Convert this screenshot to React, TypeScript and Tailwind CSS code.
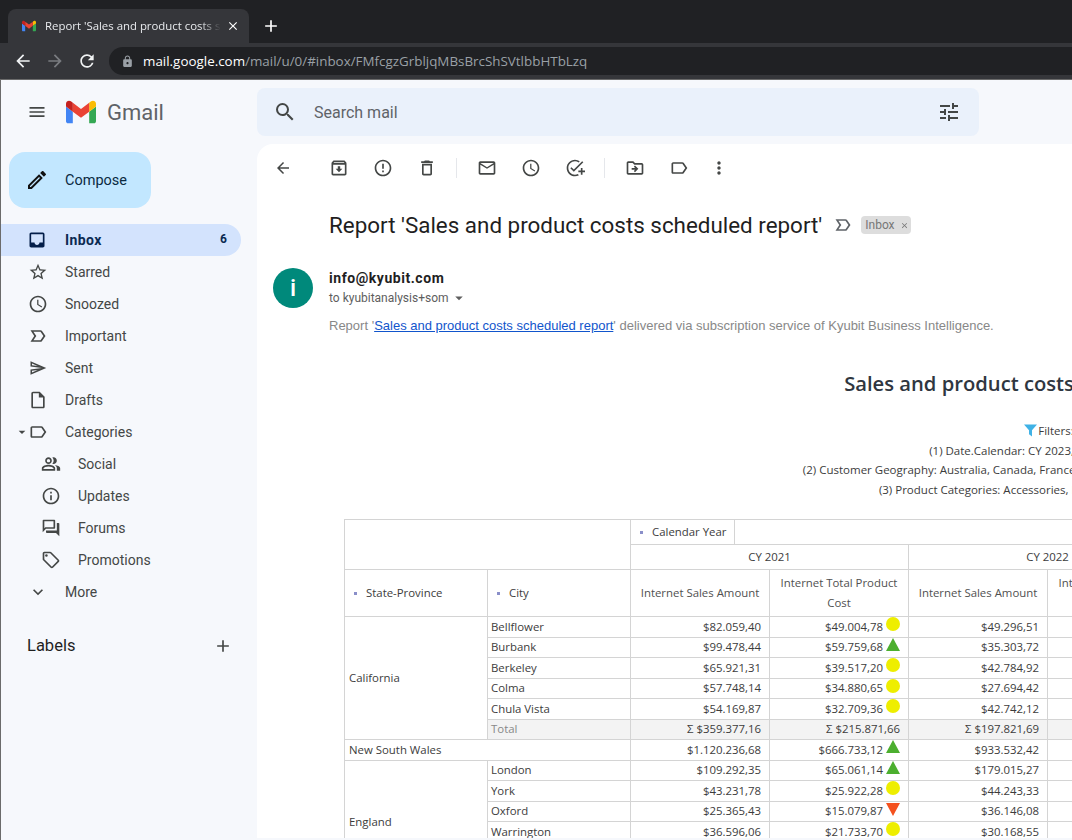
import React from "react";
import {
  MdMenu, MdSearch, MdTune, MdArrowBack, MdArrowForward, MdRefresh, MdLock, MdClose, MdAdd,
  MdInbox, MdStarBorder, MdAccessTime, MdLabelImportantOutline, MdOutlineSend, MdOutlineInsertDriveFile,
  MdLabelOutline, MdOutlinePeopleAlt, MdInfoOutline, MdOutlineForum, MdOutlineLocalOffer, MdExpandMore,
  MdOutlineArchive, MdErrorOutline, MdOutlineDelete, MdMailOutline, MdOutlineAddTask, MdOutlineDriveFileMove,
  MdMoreVert, MdOutlineEdit, MdArrowDropDown,
} from "react-icons/md";

function GmailLogo({ className }: { className: string }) {
  return (
    <svg viewBox="0 0 24 24" className={className}>
      <path fill="#4285F4" d="M1.636 21.002h3.819v-9.273L0 7.637v11.729c0 .904.732 1.636 1.636 1.636" />
      <path fill="#34A853" d="M18.545 21.002h3.819c.904 0 1.636-.732 1.636-1.636V7.637l-5.455 4.092" />
      <path fill="#FBBC04" d="M18.545 4.638v7.091L24 7.637V5.457c0-2.023-2.309-3.178-3.927-1.964" />
      <path fill="#EA4335" d="M5.455 11.729V4.638L12 9.548l6.545-4.91v7.091L12 16.639" />
      <path fill="#C5221F" d="M0 5.457v2.18l5.455 4.092V4.638L3.927 3.493C2.309 2.28 0 3.434 0 5.457" />
    </svg>
  );
}

type Nav = { icon: React.ReactNode; label: string };

const navTop: Nav[] = [
  { icon: <MdStarBorder size={20} />, label: "Starred" },
  { icon: <MdAccessTime size={20} />, label: "Snoozed" },
  { icon: <MdLabelImportantOutline size={20} />, label: "Important" },
  { icon: <MdOutlineSend size={18} />, label: "Sent" },
  { icon: <MdOutlineInsertDriveFile size={20} />, label: "Drafts" },
];
const navSub: Nav[] = [
  { icon: <MdOutlinePeopleAlt size={20} />, label: "Social" },
  { icon: <MdInfoOutline size={20} />, label: "Updates" },
  { icon: <MdOutlineForum size={20} />, label: "Forums" },
  { icon: <MdOutlineLocalOffer size={20} />, label: "Promotions" },
];

function Row({ icon, label, sub }: Nav & { sub?: boolean }) {
  return (
    <div className={`flex h-8 items-center text-sm text-[#444746] ${sub ? "pl-10" : "pl-[27px]"}`}>
      <span className="flex w-5 justify-center text-[#444746]">{icon}</span>
      <span className="ml-[17px]">{label}</span>
    </div>
  );
}

function Tool({ icon, className = "" }: { icon: React.ReactNode; className?: string }) {
  return <span className={`flex w-11 justify-center text-[#444746] ${className}`}>{icon}</span>;
}

type Mark = "y" | "u" | "d" | undefined;

function Indicator({ mark }: { mark: Mark }) {
  if (!mark) return null;
  return (
    <svg viewBox="0 0 14 14" className="-mt-[5px] ml-[3px] h-[14px] w-[14px] shrink-0">
      {mark === "y" && <circle cx="7" cy="7" r="7" fill="#eeee00" />}
      {mark === "u" && <polygon points="7,0 14,13 0,13" fill="#4caf2f" />}
      {mark === "d" && <polygon points="0,1 14,1 7,14" fill="#f4511e" />}
    </svg>
  );
}

const border = "border border-[#d4d4d4]";

function Money({ value, mark, total }: { value: string; mark?: Mark; total?: boolean }) {
  return (
    <td className={`${border} pr-2 ${total ? "bg-[#f3f3f3]" : ""}`}>
      <div className="flex items-center justify-end">
        <span>{value}</span>
        <Indicator mark={mark} />
      </div>
    </td>
  );
}

type R = { city: string; a: string; b: string; m?: Mark; c: string };

const california: R[] = [
  { city: "Bellflower", a: "$82.059,40", b: "$49.004,78", m: "y", c: "$49.296,51" },
  { city: "Burbank", a: "$99.478,44", b: "$59.759,68", m: "u", c: "$35.303,72" },
  { city: "Berkeley", a: "$65.921,31", b: "$39.517,20", m: "y", c: "$42.784,92" },
  { city: "Colma", a: "$57.748,14", b: "$34.880,65", m: "y", c: "$27.694,42" },
  { city: "Chula Vista", a: "$54.169,87", b: "$32.709,36", m: "y", c: "$42.742,12" },
];
const england: R[] = [
  { city: "London", a: "$109.292,35", b: "$65.061,14", m: "u", c: "$179.015,27" },
  { city: "York", a: "$43.231,78", b: "$25.922,28", m: "y", c: "$44.243,33" },
  { city: "Oxford", a: "$25.365,43", b: "$15.079,87", m: "d", c: "$36.146,08" },
  { city: "Warrington", a: "$36.596,06", b: "$21.733,70", m: "y", c: "$30.168,55" },
];

function Marker() {
  return <span className="mr-[9px] inline-block h-[3px] w-[3px] bg-[#8a8fc9] align-middle" />;
}

function CityCells({ r }: { r: R }) {
  return (
    <>
      <td className={`${border} pl-[3px]`}>{r.city}</td>
      <Money value={r.a} />
      <Money value={r.b} mark={r.m} />
      <Money value={r.c} />
      <td className={border} />
    </>
  );
}

function Report() {
  const tr = "h-[20.5px]";
  return (
    <table className="w-[1416px] table-fixed border-collapse text-left text-[11.4px] leading-[14px] text-[#3c3c3c]">
      <colgroup>
        <col className="w-[143px]" />
        <col className="w-[143px]" />
        <col className="w-[139px]" />
        <col className="w-[139px]" />
        <col className="w-[139px]" />
        <col className="w-[139px]" />
        <col />
      </colgroup>
      <tbody>
        <tr className="h-[25px]">
          <td colSpan={2} rowSpan={2} className={border} />
          <td colSpan={5} className={`${border} p-0`}>
            <div className="flex h-full w-[104px] items-center border-r border-[#d4d4d4] pl-[9px] leading-[24px]">
              <Marker />
              Calendar Year
            </div>
          </td>
        </tr>
        <tr className="h-[25px]">
          <td colSpan={2} className={`${border} pb-[1px] text-center`}>CY 2021</td>
          <td colSpan={2} className={`${border} pb-[1px] text-center`}>CY 2022</td>
          <td className={border} />
        </tr>
        <tr className="h-[47px]">
          <td className={`${border} pl-[9px]`}><Marker />State-Province</td>
          <td className={`${border} pl-[9px]`}><Marker />City</td>
          <td className={`${border} px-2 text-center text-[#505050]`}>Internet Sales Amount</td>
          <td className={`${border} px-2 text-center leading-[20px] text-[#505050]`}>Internet Total Product Cost</td>
          <td className={`${border} px-2 text-center text-[#505050]`}>Internet Sales Amount</td>
          <td className={`${border} px-2 text-center leading-[20px] text-[#505050]`}>Internet Total Product Cost</td>
          <td className={border} />
        </tr>
        {california.map((r, i) => (
          <tr key={r.city} className={tr}>
            {i === 0 && <td rowSpan={6} className={`${border} pl-1`}>California</td>}
            <CityCells r={r} />
          </tr>
        ))}
        <tr className={tr}>
          <td className={`${border} bg-[#f3f3f3] pl-[3px] text-[#888888]`}>Total</td>
          <Money value="Σ $359.377,16" total />
          <Money value="Σ $215.871,66" total />
          <Money value="Σ $197.821,69" total />
          <td className={`${border} bg-[#f3f3f3]`} />
        </tr>
        <tr className={tr}>
          <td colSpan={2} className={`${border} pl-1`}>New South Wales</td>
          <Money value="$1.120.236,68" />
          <Money value="$666.733,12" mark="u" />
          <Money value="$933.532,42" />
          <td className={border} />
        </tr>
        {england.map((r, i) => (
          <tr key={r.city} className={tr}>
            {i === 0 && <td rowSpan={6} className={`${border} pl-1`}>England</td>}
            <CityCells r={r} />
          </tr>
        ))}
        <tr className={tr}><td className={border} colSpan={6} /></tr>
        <tr className={tr}><td className={border} colSpan={6} /></tr>
      </tbody>
    </table>
  );
}

export default function App() {
  return (
    <div className="flex h-[840px] w-[1072px] flex-col overflow-hidden bg-[#f6f8fc] font-['Roboto',sans-serif]">
      {/* Tab strip */}
      <div className="flex h-[43px] shrink-0 items-end bg-[#202124] pl-2 font-['Open_Sans',sans-serif]">
        <div className="flex h-[34px] w-[241px] items-center rounded-t-lg bg-[#35363a] pl-[14px] pr-2">
          <GmailLogo className="h-[14px] w-[14px] shrink-0" />
          <span className="ml-[9px] w-[176px] overflow-hidden whitespace-nowrap text-[11.4px] text-[#e8eaed] [mask-image:linear-gradient(to_right,black_88%,transparent)]">
            Report 'Sales and product costs scheduled report'
          </span>
          <MdClose size={14} className="ml-[5px] text-white" />
        </div>
        <MdAdd size={20} className="mb-[7px] ml-3 text-white" />
      </div>
      {/* Toolbar */}
      <div className="flex h-[37px] shrink-0 items-center border-b border-[#6b6b6b] bg-[#35363a] font-['Open_Sans',sans-serif]">
        <MdArrowBack size={20} className="ml-[13px] text-[#f1f3f4]" />
        <MdArrowForward size={20} className="ml-3 text-[#7a7c80]" />
        <MdRefresh size={20} className="ml-3 text-[#f1f3f4]" />
        <div className="ml-3 flex h-7 flex-1 items-center rounded-l-full bg-[#202124] pl-3">
          <MdLock size={13} className="text-[#9aa0a6]" />
          <span className="ml-[9px] whitespace-nowrap text-[13.4px] text-[#9aa0a6]">
            <span className="text-white">mail.google.com</span>/mail/u/0/#inbox/FMfcgzGrbljqMBsBrcShSVtlbbHTbLzq
          </span>
        </div>
      </div>

      {/* Gmail header + body, with the 1px window edge at the left */}
      <div className="flex min-h-0 flex-1 border-l border-[#6b6b6b]">
        <div className="flex w-[256px] shrink-0 flex-col">
          <div className="flex h-[64px] items-center pl-[26px]">
            <MdMenu size={20} className="text-[#444746]" />
            <GmailLogo className="ml-[19px] h-[30px] w-[30px]" />
            <span className="ml-[11px] text-[22px] text-[#5f6368]">Gmail</span>
          </div>
          <div className="ml-2 mt-2 flex h-14 w-[142px] items-center rounded-2xl bg-[#c2e7ff] pl-4 text-[14.5px] text-[#0b2a42]">
            <MdOutlineEdit size={24} className="text-[#111111]" />
            <span className="ml-4 pt-[2px]">Compose</span>
          </div>
          <div className="mt-4 w-[240px]">
            <div className="flex h-8 items-center rounded-r-full bg-[#d3e3fd] pl-[26px] pr-[14px] text-sm font-bold text-[#0b2a52]">
              <MdInbox size={20} className="text-[#041e49]" />
              <span className="ml-[18px] flex-1 tracking-[0.4px]">Inbox</span>
              <span className="text-[12px]">6</span>
            </div>
            {navTop.map((n) => <Row key={n.label} {...n} />)}
            <div className="flex h-8 items-center pl-[13px] text-sm text-[#444746]">
              <MdArrowDropDown size={16} className="-mr-[2px]" />
              <MdLabelOutline size={20} />
              <span className="ml-[17px]">Categories</span>
            </div>
            {navSub.map((n) => <Row key={n.label} {...n} sub />)}
            <Row icon={<MdExpandMore size={20} />} label="More" />
            <div className="mt-[22px] flex h-8 items-center justify-between pl-[26px] pr-[8px] text-[16.5px] text-[#1f1f1f]">
              <span>Labels</span>
              <MdAdd size={20} className="text-[#444746]" />
            </div>
          </div>
        </div>

        <div className="flex min-w-0 flex-1 flex-col">
          <div className="flex h-[64px] shrink-0 items-start pt-2">
            <div className="flex h-12 w-[722px] items-center rounded-lg bg-[#eaf1fb] pl-[16px] pr-[18px]">
              <MdSearch size={24} className="text-[#444746]" />
              <span className="ml-[17px] flex-1 pt-[2px] text-[16px] text-[#5f6368]">Search mail</span>
              <MdTune size={24} className="text-[#444746]" />
            </div>
          </div>
          <div className="h-[694px] shrink-0 overflow-hidden rounded-tl-2xl bg-white">
            <div className="flex h-12 items-center pl-1">
              <Tool icon={<MdArrowBack size={18} />} />
              <Tool icon={<MdOutlineArchive size={20} />} className="ml-3" />
              <Tool icon={<MdErrorOutline size={20} />} />
              <Tool icon={<MdOutlineDelete size={20} />} />
              <span className="ml-[7px] h-5 w-px bg-[#e5e7eb]" />
              <Tool icon={<MdMailOutline size={20} />} className="ml-2" />
              <Tool icon={<MdAccessTime size={20} />} />
              <Tool icon={<MdOutlineAddTask size={20} />} />
              <span className="ml-[7px] h-5 w-px bg-[#e5e7eb]" />
              <Tool icon={<MdOutlineDriveFileMove size={20} />} className="ml-2" />
              <Tool icon={<MdLabelOutline size={20} />} />
              <span className="ml-1 flex w-7 justify-center text-[#444746]"><MdMoreVert size={20} /></span>
            </div>
            <div className="ml-[72px] mt-[13px] flex h-10 items-center whitespace-nowrap">
              <span className="pt-[2px] text-[22.4px] text-[#1f1f1f]">Report 'Sales and product costs scheduled report'</span>
              <MdLabelImportantOutline size={20} className="ml-[11px] text-[#5f6368]" />
              <span className="ml-2 flex h-[18px] w-[50px] items-center rounded-[4px] bg-[#dddddd] pl-1 text-[12px] text-[#777777]">
                Inbox
                <MdClose size={9} className="ml-[5px]" />
              </span>
            </div>
            <div className="ml-4 mt-[23px] flex">
              <div className="flex h-10 w-10 items-center justify-center rounded-full bg-[#00897b] text-[24px] font-medium text-white">i</div>
              <div className="ml-4">
                <div className="h-5 text-sm font-bold leading-5 tracking-[0.55px] text-[#1f1f1f]">info@kyubit.com</div>
                <div className="flex h-5 items-center text-[12px] text-[#5e5e5e]">
                  to kyubitanalysis+som
                  <MdArrowDropDown size={18} className="ml-[1px]" />
                </div>
              </div>
            </div>
            <div className="ml-[72px] mt-[8px] h-5 whitespace-nowrap font-['Liberation_Sans',sans-serif] text-[13px] leading-5 text-[#888888]">
              Report '<span className="text-[#1155cc] underline">Sales and product costs scheduled report</span>' delivered via subscription service of Kyubit Business Intelligence.
            </div>
            <div className="ml-[87px] mt-[32px] w-[1416px] text-center font-['Open_Sans',sans-serif]">
              <div className="h-[30px] pr-[14px] text-[20.2px] font-semibold leading-[30px] text-[#2f3640]">Sales and product costs scheduled report</div>
              <div className="mt-[23px] text-[11.5px] leading-[19.5px] text-[#3c3c3c]">
                <div className="pr-[6px]">
                  <svg viewBox="0 0 14 13" className="mr-[1px] inline-block h-[13px] w-[13px] align-[-2px]">
                    <path d="M0 0h14L8.6 6.2V13L5.4 10.5V6.2z" fill="#3fb2e6" />
                  </svg>
                  Filters:
                </div>
                <div className="pr-[6px]">(1) Date.Calendar: CY 2023, CY 2022, CY 2021</div>
                <div>(2) Customer Geography: Australia, Canada, France, Germany, United Kingdom, United States</div>
                <div>(3) Product Categories: Accessories, Bikes, Clothing, Components</div>
              </div>
              <div className="mt-[20px]">
                <Report />
              </div>
            </div>
          </div>
        </div>
      </div>
    </div>
  );
}
